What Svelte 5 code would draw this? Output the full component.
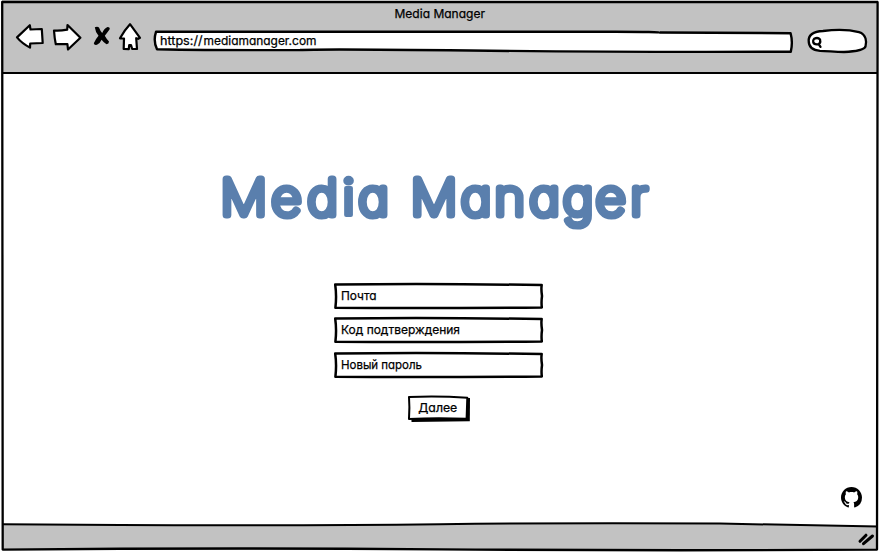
<script>
  const fields = [
    { label: 'Почта', width: 35.5 },
    { label: 'Код подтверждения', width: 119 },
    { label: 'Новый пароль', width: 81 }
  ];

  const stretch = 1.05;
  const titleX = [220.6, 271.4, 307.5, 342.3, 358.5, 390, 410.7, 461, 494.5, 529.5, 563, 595.8, 630.5]
    .map((x) => (x / stretch).toFixed(2))
    .join(' ');
</script>

<div class="window">
  <header>
    <div class="caption">
      <svg width="100" height="22" viewBox="0 0 100 22">
        <text x="4.5" y="16" textLength="90.5" lengthAdjust="spacingAndGlyphs">Media Manager</text>
      </svg>
    </div>
    <nav>
      <svg class="tools" width="130" height="32" viewBox="14 22 130 32">
        <g fill="#fff" stroke="#000" stroke-width="2.2" stroke-linejoin="round">
          <path d="M17 37.4L29.8 25.2L30.5 29.5L41.8 29L42.7 43L30.2 43.5L30 47.6Q22 43.5 17 37.4Z" />
          <path d="M54 30.5Q60 31 67.2 29.6L67.5 25L80.4 37.8L68 49.5L67.4 44L55.8 44.2Q54.5 38 54 30.5Z" />
          <path d="M130 24.2L140 37.8L138.2 38.8L136.2 38.2L137 49L132.2 49L131 45L129.2 45L128.8 49.2L123.7 49L124 38.5L120 38.3Q124.5 30 130 24.2Z" />
        </g>
        <path d="M94.8 27.2Q97.5 26 99 27.5Q100.5 31.5 102.2 33Q104 28.5 107.5 27Q110.5 27 109.5 29.5Q107 33 104.8 35.8Q106.5 39 109 41.5Q109 44 106.5 44.3Q103.5 42.5 101.6 39.8Q100 43.5 97 44.8Q94 45.5 93.8 43.2Q96 38.5 98.5 35.7Q95.5 32.5 94.8 27.2Z" />
      </svg>
      <div class="address">
        <svg width="642" height="26" viewBox="152 28 642 26">
          <path d="M156 31.8Q300 32.2 480 31.8T660 32.5L790.6 33.2Q793 42 790.8 51.7Q620 52.3 470 50.5T300 50Q220 50.4 157 49.2Q153 41 156 31.8Z" fill="#fff" stroke="#000" stroke-width="2.4" stroke-linejoin="round" />
          <text x="160" y="45.3" textLength="42.5" lengthAdjust="spacingAndGlyphs">https://</text>
          <text x="203.5" y="45.3" textLength="113" lengthAdjust="spacingAndGlyphs">mediamanager.com</text>
        </svg>
      </div>
      <svg class="search" width="62" height="28" viewBox="806 27 62 28">
        <path d="M808.7 41C808.5 35 814 31.5 823 31C838 29 851 30 859 32.2C866.5 34.5 866.8 42 865.5 46.5C864 50.5 854 51.5 844 52C834 52 828 50.8 820 50.8C812 50.2 808.7 46 808.7 41Z" fill="#fff" stroke="#000" stroke-width="2.3" />
        <path d="M814.2 38.7Q818 37 820 39.5Q821 43.5 818 44.3Q813.8 44.8 813.2 42Q812.8 40.2 814.2 38.7ZM818.6 44L820.5 46.8" fill="none" stroke="#000" stroke-width="2.3" stroke-linecap="round" />
      </svg>
    </nav>
  </header>

  <main>
    <h1>
      <svg width="440" height="80" viewBox="217 158 440 80">
        <text y="215.4" x={titleX} transform="scale({stretch} 1)">Med<tspan class="dotted">i</tspan>a Manager</text>
      </svg>
    </h1>
    <form>
      {#each fields as field}
        <div class="field">
          <svg width="212" height="28" viewBox="0 0 212 28">
            <path d="M2.2 2.5Q105 1.4 208.7 3.1Q208 7 209 14Q208.2 20 208.8 25.4Q100 26.4 2.4 25.8Q3.8 14 2.2 2.5Z" fill="#fff" stroke="#000" stroke-width="2.5" stroke-linejoin="round" />
            <text x="8" y="17.8" textLength={field.width} lengthAdjust="spacingAndGlyphs">{field.label}</text>
          </svg>
        </div>
      {/each}
      <div class="submit">
        <svg width="64" height="28" viewBox="407 395 64 28">
          <path d="M411 399L470 398L469.8 421.3L411.5 422Z" />
          <path d="M409 397Q438 395.8 467.3 397.7L466.6 418.8Q438 417.5 409 418.9Q409.8 407 409 397Z" fill="#fff" stroke="#000" stroke-width="2" stroke-linejoin="round" />
          <text x="418.3" y="411.8" textLength="39" lengthAdjust="spacingAndGlyphs">Далее</text>
        </svg>
      </div>
    </form>
    <div class="social">
      <svg width="21" height="21" viewBox="0 0 16 16">
        <path d="M8 0C3.58 0 0 3.58 0 8c0 3.54 2.29 6.53 5.47 7.59.4.07.55-.17.55-.38 0-.19-.01-.82-.01-1.49-2.01.37-2.53-.49-2.69-.94-.09-.23-.48-.94-.82-1.13-.28-.15-.68-.52-.01-.53.63-.01 1.08.58 1.23.82.72 1.21 1.87.87 2.33.66.07-.52.28-.87.51-1.07-1.78-.2-3.64-.89-3.64-3.95 0-.87.31-1.59.82-2.15-.08-.2-.36-1.02.08-2.12 0 0 .67-.21 2.2.82.64-.18 1.32-.27 2-.27s1.36.09 2 .27c1.53-1.04 2.2-.82 2.2-.82.44 1.1.16 1.92.08 2.12.51.56.82 1.27.82 2.15 0 3.07-1.87 3.75-3.65 3.95.29.25.54.73.54 1.48 0 1.07-.01 1.93-.01 2.2 0 .21.15.46.55.38A8.01 8.01 0 0 0 16 8c0-4.42-3.58-8-8-8Z" />
      </svg>
    </div>
  </main>

  <footer>
    <svg width="880" height="30" viewBox="0 522 880 30">
      <path d="M3 524.2L120 525.1Q300 525.8 440 524.2T720 523.6L878 526.5V550H3Z" fill="#c2c2c2" />
      <path d="M3 524.2L120 525.1Q300 525.8 440 524.2T720 523.6L878 526.5" fill="none" stroke="#000" stroke-width="2" />
      <path d="M860 541.3L866 535.2M863.5 543.7L872.5 536" stroke="#000" stroke-width="3" stroke-linecap="round" />
    </svg>
  </footer>

  <svg class="frame" width="880" height="552" viewBox="0 0 880 552">
    <path d="M2.2 2Q440 1.4 877.6 2.2Q878.2 280 877 549.6Q660 551 440 549.3T2.7 549.6Q1.8 280 2.2 2Z" fill="none" stroke="#000" stroke-width="2.3" stroke-linejoin="round" />
  </svg>
</div>

<style>
  :global(body) {
    margin: 0;
    background: #fff;
  }
  .window {
    position: relative;
    width: 880px;
    height: 552px;
    display: flex;
    flex-direction: column;
    overflow: hidden;
    font-family: Inter, 'Noto Sans', sans-serif;
    font-feature-settings: 'cv11' 1;
    background: #fff;
  }
  svg {
    display: block;
    flex: none;
    overflow: visible;
  }
  text {
    font-size: 12.3px;
    fill: #000;
    stroke: #000;
    stroke-width: 0.25px;
  }
  header {
    box-sizing: border-box;
    height: 74px;
    flex: none;
    margin: 0 2px;
    padding-top: 2px;
    background: #c2c2c2;
    border-bottom: 2px solid #000;
  }
  .caption {
    display: flex;
    justify-content: center;
    height: 20px;
  }
  nav {
    display: flex;
    align-items: flex-start;
    padding-left: 12px;
  }
  .address {
    padding: 6px 0 0 8px;
  }
  .search {
    margin: 5px 0 0 12px;
  }
  main {
    flex: 1;
    display: flex;
    flex-direction: column;
    align-items: center;
  }
  h1 {
    margin: 84px 6px 0 0;
  }
  h1 text {
    font-size: 49.5px;
    font-weight: 100;
    fill: #5a7fad;
    stroke: #5a7fad;
    stroke-width: 7.2px;
    stroke-linejoin: round;
  }
  .dotted {
    font-weight: 400;
    stroke-width: 4px;
  }
  form {
    display: flex;
    flex-direction: column;
    align-items: center;
    gap: 6.5px;
    margin: 43.7px 3px 0 0;
  }
  .submit {
    margin-top: 9.8px;
  }
  .social {
    align-self: flex-end;
    margin: auto 18px 14px 0;
  }
  footer {
    flex: none;
    height: 30px;
  }
  .frame {
    position: absolute;
    inset: 0;
    pointer-events: none;
  }
</style>
